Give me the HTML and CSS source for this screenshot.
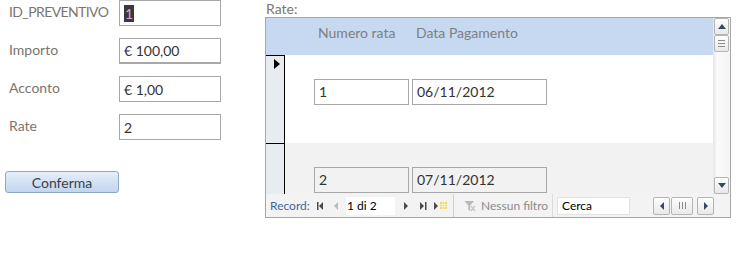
FILE: index.html
```html
<!DOCTYPE html>
<html lang="it">
<head>
    <meta charset="UTF-8">
    <title>Preventivo</title>
    <link rel="stylesheet" href="styles.css">
</head>
<body>
    <div class="form">
        <div class="main-fields">
            <div class="field">
                <span class="field-label caps">ID_PREVENTIVO</span>
                <div class="field-input"><span class="sel">1</span></div>
            </div>
            <div class="field">
                <span class="field-label">Importo</span>
                <div class="field-input thick">€ 100,00</div>
            </div>
            <div class="field">
                <span class="field-label">Acconto</span>
                <div class="field-input">€ 1,00</div>
            </div>
            <div class="field">
                <span class="field-label">Rate</span>
                <div class="field-input">2</div>
            </div>
            <button class="btn">Conferma</button>
        </div>

        <div class="subform-wrap">
            <div class="sub-label">Rate:</div>
            <div class="subform">
                <div class="sub-body">
                    <div class="records">
                        <div class="rec-header">
                            <span class="h-num">Numero rata</span>
                            <span class="h-date">Data Pagamento</span>
                        </div>
                        <div class="rec">
                            <div class="selector"><span class="arrow"></span></div>
                            <div class="rec-cells">
                                <div class="cell c-num">1</div>
                                <div class="cell c-date">06/11/2012</div>
                            </div>
                        </div>
                        <div class="rec alt">
                            <div class="selector"></div>
                            <div class="rec-cells">
                                <div class="cell c-num">2</div>
                                <div class="cell c-date">07/11/2012</div>
                            </div>
                        </div>
                    </div>
                    <div class="vscroll">
                        <div class="sb-btn"><span class="tri-up"></span></div>
                        <div class="sb-btn thumb-v"><span></span><span></span><span></span></div>
                        <div class="sb-track"></div>
                        <div class="sb-btn"><span class="tri-down"></span></div>
                    </div>
                </div>
                <div class="navbar">
                    <span class="nav-label">Record:</span>
                    <svg class="nav-icon" width="16" height="10" viewBox="0 0 16 10"><rect x="5" y="1" width="1.5" height="8" fill="#4a4a4a"/><polygon points="11,1 11,9 7,5" fill="#4a4a4a"/></svg>
                    <svg class="nav-icon" width="16" height="10" viewBox="0 0 16 10"><polygon points="10,1 10,9 6,5" fill="#bcbcbc"/></svg>
                    <div class="nav-pos">1 di 2</div>
                    <svg class="nav-icon" width="14" height="10" viewBox="0 0 14 10"><polygon points="5,1 5,9 9,5" fill="#4a4a4a"/></svg>
                    <svg class="nav-icon" width="16" height="10" viewBox="0 0 16 10"><polygon points="7,1 7,9 11,5" fill="#4a4a4a"/><rect x="12" y="1" width="1.5" height="8" fill="#4a4a4a"/></svg>
                    <svg class="nav-icon" width="22" height="10" viewBox="0 0 22 10"><polygon points="5,1 5,9 9,5" fill="#4a4a4a"/><rect x="11" y="1" width="7" height="7" fill="#f6d55a"/><path d="M11 3.5h7M11 5.5h7M13.5 1v7M15.5 1v7" stroke="#fff6cc" stroke-width="0.8"/></svg>
                    <div class="nav-filter">
                        <svg width="12" height="12" viewBox="0 0 12 12"><path d="M0.5 1 H10 L6.2 5.5 V11 L4.3 9.8 V5.5 Z" fill="#b8b8b8"/><path d="M7 6 L11 11 M11 6 L7 11" stroke="#c8c8c8" stroke-width="1.3"/></svg>
                        <span>Nessun filtro</span>
                    </div>
                    <div class="nav-search">Cerca</div>
                    <div class="hscroll">
                        <div class="sb-btn"><span class="tri-left"></span></div>
                        <div class="sb-btn thumb-h"><span></span><span></span><span></span></div>
                        <div class="sb-btn"><span class="tri-right"></span></div>
                    </div>
                </div>
            </div>
        </div>
    </div>
</body>
</html>
```

FILE: styles.css
```css
body {
    margin: 0;
    font-family: Lato, "Liberation Sans", sans-serif;
    font-size: 14px;
    color: #333;
    background: #fff;
}
.form {
    display: flex;
    align-items: flex-start;
}
.main-fields {
    width: 265px;
}
.field {
    display: flex;
    align-items: center;
    height: 26px;
    margin-bottom: 12px;
}
.field-label {
    width: 119px;
    padding: 0 0 4px 9px;
    box-sizing: border-box;
    color: #7b756e;
}
.field-label.caps {
    letter-spacing: -0.6px;
}
.field-input {
    width: 102px;
    height: 26px;
    box-sizing: border-box;
    border: 1px solid #a8a8a8;
    padding: 0 4px;
    display: flex;
    align-items: center;
    color: #333;
}
.field-input.thick {
    border-bottom: 2px solid #a8a8a8;
}
.sel {
    background: #3a3a3a;
    color: #d9a8d8;
    padding: 1px;
    line-height: 15px;
}
.btn {
    display: block;
    margin: 31px 0 0 5px;
    width: 114px;
    height: 22px;
    border: 1px solid #8ea6c9;
    border-radius: 3px;
    background: linear-gradient(#e6eefa, #d3e1f4 50%, #c3d5ef);
    font-family: inherit;
    font-size: 14px;
    color: #3a3f4c;
    padding: 0;
}

/* subform */
.subform-wrap {
    width: 466px;
}
.sub-label {
    height: 17px;
    line-height: 17px;
    padding-left: 1px;
    color: #7b756e;
}
.subform {
    border: 1px solid #a6a6a6;
}
.sub-body {
    display: flex;
    height: 176px;
}
.records {
    flex: 1;
    overflow: hidden;
}
.rec-header {
    height: 37px;
    box-sizing: border-box;
    padding-top: 6px;
    background: #c6d9f0;
    color: #7f7f7f;
    display: flex;
    line-height: 17px;
}
.h-num {
    margin-left: 52px;
    width: 98px;
}
.rec {
    display: flex;
    height: 88px;
    background: #fff;
}
.rec.alt {
    background: #f2f2f2;
}
.selector {
    width: 18px;
    border-right: 1px solid #000;
    border-top: 1px solid #000;
    background: #e8ecf1;
}
.arrow {
    display: block;
    width: 0;
    height: 0;
    margin: 3px 0 0 8px;
    border-left: 6px solid #000;
    border-top: 5px solid transparent;
    border-bottom: 5px solid transparent;
}
.rec-cells {
    flex: 1;
    display: flex;
    align-items: flex-start;
    gap: 3px;
    padding: 24px 0 0 29px;
}
.cell {
    height: 26px;
    box-sizing: border-box;
    border: 1px solid #a8a8a8;
    padding: 0 4px 1px;
    display: flex;
    align-items: center;
}
.c-num {
    width: 95px;
}
.c-date {
    width: 135px;
}

/* scrollbars */
.vscroll {
    width: 17px;
    display: flex;
    flex-direction: column;
    background: linear-gradient(to right, #e6e6e6, #fbfbfb 25%, #f4f4f4);
}
.sb-btn {
    box-sizing: border-box;
    border: 1px solid #b5b5b5;
    border-radius: 2px;
    background: linear-gradient(#fdfdfd, #e9e9e9);
    display: flex;
    align-items: center;
    justify-content: center;
}
.vscroll .sb-btn {
    height: 17px;
    margin: 0 1px;
}
.sb-track {
    flex: 1;
}
.thumb-v {
    flex-direction: column;
    gap: 2px;
}
.thumb-v span {
    display: block;
    width: 7px;
    height: 1px;
    background: #8a8a8a;
}
.tri-up, .tri-down, .tri-left, .tri-right {
    width: 0;
    height: 0;
}
.tri-up {
    border-bottom: 5px solid #38476a;
    border-left: 4px solid transparent;
    border-right: 4px solid transparent;
}
.tri-down {
    border-top: 5px solid #38476a;
    border-left: 4px solid transparent;
    border-right: 4px solid transparent;
}
.tri-left {
    border-right: 4px solid #38476a;
    border-top: 4px solid transparent;
    border-bottom: 4px solid transparent;
}
.tri-right {
    border-left: 4px solid #38476a;
    border-top: 4px solid transparent;
    border-bottom: 4px solid transparent;
}

/* navigation bar */
.navbar {
    height: 23px;
    display: flex;
    align-items: center;
    background: #f3f3f3;
    font-size: 12px;
}
.nav-label {
    width: 46px;
    padding-left: 4px;
    box-sizing: border-box;
    color: #3f67a0;
}
.nav-icon {
    display: block;
}
.nav-pos {
    width: 49px;
    height: 18px;
    margin: 0 4px 0 2px;
    background: #fff;
    color: #000;
    line-height: 18px;
    padding-left: 1px;
    box-sizing: border-box;
}
.nav-filter {
    display: flex;
    align-items: center;
    gap: 5px;
    height: 23px;
    width: 100px;
    box-sizing: border-box;
    margin-left: 2px;
    padding-left: 10px;
    border-left: 1px solid #cfcfcf;
    border-right: 1px solid #dcdcdc;
    color: #8c8c8c;
}
.nav-search {
    width: 73px;
    height: 18px;
    margin-left: 4px;
    box-sizing: border-box;
    border: 1px solid #e2e2e2;
    background: #fff;
    color: #000;
    line-height: 16px;
    padding-left: 4px;
}
.hscroll {
    display: flex;
    gap: 1px;
    margin-left: 23px;
    height: 18px;
}
.hscroll .sb-btn {
    width: 17px;
    height: 18px;
}
.thumb-h {
    width: 22px !important;
    margin-right: 3px;
    gap: 2px;
}
.thumb-h span {
    display: block;
    width: 1px;
    height: 7px;
    background: #8a8a8a;
}
```
